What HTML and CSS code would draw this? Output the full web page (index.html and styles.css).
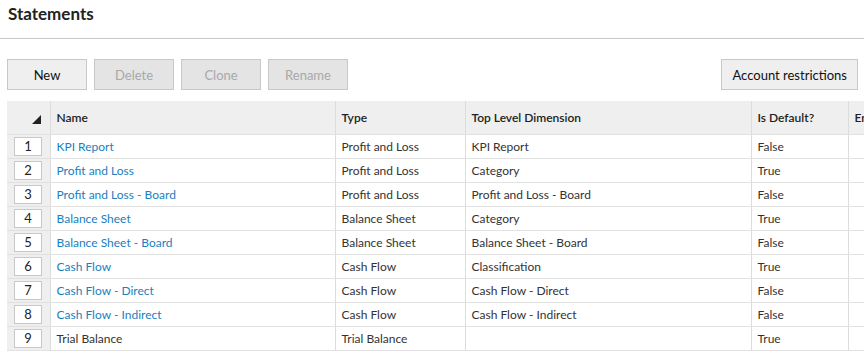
FILE: index.html
```html
<!DOCTYPE html>
<html lang="en">
<head>
    <meta charset="UTF-8">
    <title>Statements</title>
    <link rel="stylesheet" href="styles.css">
</head>
<body>
    <div class="page-header">
        <h1>Statements</h1>
    </div>
    <div class="toolbar">
        <div class="btn-group">
            <button class="btn">New</button>
            <button class="btn" disabled>Delete</button>
            <button class="btn" disabled>Clone</button>
            <button class="btn" disabled>Rename</button>
        </div>
        <button class="btn btn-wide">Account restrictions</button>
    </div>
    <div class="grid-wrap">
        <table class="grid">
            <colgroup>
                <col class="c-num">
                <col class="c-name">
                <col class="c-type">
                <col class="c-dim">
                <col class="c-def">
                <col class="c-extra">
            </colgroup>
            <thead>
                <tr>
                    <th class="num"><span class="sort-corner"></span></th>
                    <th>Name</th>
                    <th>Type</th>
                    <th>Top Level Dimension</th>
                    <th>Is Default?</th>
                    <th>Enabled</th>
                </tr>
            </thead>
            <tbody>
                <tr>
                    <td class="num"><span class="row-no">1</span></td>
                    <td><a href="#">KPI Report</a></td>
                    <td>Profit and Loss</td>
                    <td>KPI Report</td>
                    <td>False</td>
                    <td></td>
                </tr>
                <tr>
                    <td class="num"><span class="row-no">2</span></td>
                    <td><a href="#">Profit and Loss</a></td>
                    <td>Profit and Loss</td>
                    <td>Category</td>
                    <td>True</td>
                    <td></td>
                </tr>
                <tr>
                    <td class="num"><span class="row-no">3</span></td>
                    <td><a href="#">Profit and Loss - Board</a></td>
                    <td>Profit and Loss</td>
                    <td>Profit and Loss - Board</td>
                    <td>False</td>
                    <td></td>
                </tr>
                <tr>
                    <td class="num"><span class="row-no">4</span></td>
                    <td><a href="#">Balance Sheet</a></td>
                    <td>Balance Sheet</td>
                    <td>Category</td>
                    <td>True</td>
                    <td></td>
                </tr>
                <tr>
                    <td class="num"><span class="row-no">5</span></td>
                    <td><a href="#">Balance Sheet - Board</a></td>
                    <td>Balance Sheet</td>
                    <td>Balance Sheet - Board</td>
                    <td>False</td>
                    <td></td>
                </tr>
                <tr>
                    <td class="num"><span class="row-no">6</span></td>
                    <td><a href="#">Cash Flow</a></td>
                    <td>Cash Flow</td>
                    <td>Classification</td>
                    <td>True</td>
                    <td></td>
                </tr>
                <tr>
                    <td class="num"><span class="row-no">7</span></td>
                    <td><a href="#">Cash Flow - Direct</a></td>
                    <td>Cash Flow</td>
                    <td>Cash Flow - Direct</td>
                    <td>False</td>
                    <td></td>
                </tr>
                <tr>
                    <td class="num"><span class="row-no">8</span></td>
                    <td><a href="#">Cash Flow - Indirect</a></td>
                    <td>Cash Flow</td>
                    <td>Cash Flow - Indirect</td>
                    <td>False</td>
                    <td></td>
                </tr>
                <tr>
                    <td class="num"><span class="row-no">9</span></td>
                    <td>Trial Balance</td>
                    <td>Trial Balance</td>
                    <td></td>
                    <td>True</td>
                    <td></td>
                </tr>
            </tbody>
        </table>
    </div>
</body>
</html>
```

FILE: styles.css
```css
body {
    font-family: Lato, "Open Sans", sans-serif;
    font-size: 12px;
    color: #333;
    margin: 0;
    padding: 0;
    background-color: #fff;
    overflow: hidden;
}
.page-header {
    height: 38px;
    border-bottom: 1px solid #c8c8c8;
    padding-left: 8px;
}
.page-header h1 {
    margin: 0;
    padding-top: 3px;
    font-size: 17px;
    font-weight: bold;
    color: #222;
    line-height: 22px;
}
.toolbar {
    display: flex;
    justify-content: space-between;
    padding: 20px 6px 0 7px;
}
.btn-group {
    display: flex;
    gap: 7px;
}
.btn {
    width: 80px;
    height: 31px;
    border: 1px solid #c8c8c8;
    background-color: #efefef;
    color: #111;
    font-family: inherit;
    font-size: 13px;
    padding: 0;
    cursor: pointer;
}
.btn:disabled {
    background-color: #e4e4e4;
    color: #a8a8a8;
    cursor: default;
}
.btn-wide {
    width: auto;
    padding: 0 10px;
}
.grid-wrap {
    margin: 11px 0 0 7px;
    overflow: hidden;
}
.grid {
    table-layout: fixed;
    border-collapse: collapse;
    width: 900px;
}
.c-num { width: 43px; }
.c-name { width: 285px; }
.c-type { width: 130px; }
.c-dim { width: 286px; }
.c-def { width: 97px; }
.c-extra { width: 59px; }
th, td {
    text-align: left;
    padding: 0 6px;
    white-space: nowrap;
    overflow: hidden;
    border-left: 1px solid #dcdcdc;
    border-bottom: 1px solid #e2e2e2;
}
th {
    height: 33px;
    background-color: #efefef;
    font-weight: 600;
    color: #222;
}
td {
    height: 23px;
}
th.num, td.num {
    border-left: none;
    background-color: #efefef;
    padding: 0;
}
th.num {
    position: relative;
}
.sort-corner {
    position: absolute;
    right: 9px;
    bottom: 10px;
    width: 0;
    height: 0;
    border-left: 9px solid transparent;
    border-bottom: 9px solid #222;
}
.row-no {
    display: block;
    width: 26px;
    height: 17px;
    line-height: 17px;
    margin-left: 7px;
    background-color: #fff;
    border: 1px solid #c8c8c8;
    text-align: center;
    font-size: 13px;
    color: #222;
}
a {
    color: #1a80c0;
    text-decoration: none;
}
```
